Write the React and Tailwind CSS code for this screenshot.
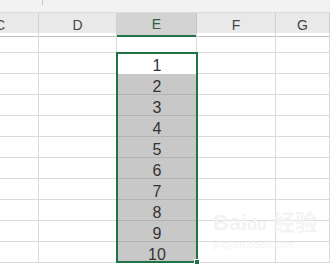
import React from "react";

const cols = ["C", "D", "E", "F", "G"];
const nums = [1, 2, 3, 4, 5, 6, 7, 8, 9, 10];

export default function App() {
  return (
    <div className="relative w-[330px] h-[265px] overflow-hidden bg-white" style={{ fontFamily: '"Liberation Sans", "Noto Sans", sans-serif' }}>
      <div className="relative h-[13px] bg-[#f2f2f2] border-b border-[#dcdcdc]">
        <div className="absolute left-[42px] top-0 w-px h-[5px] bg-[#c8c8c8]" />
      </div>
      <div className="grid grid-cols-[39px_78px_80px_79px_1fr] h-[20px] bg-[#e9e9e9]">
        {cols.map((c, i) => (
          <div
            key={c}
            className={
              c === "E"
                ? "flex items-center justify-center pt-[1px] bg-[#d3d3d3] border-b-2 border-[#217346] border-r border-r-[#c6c6c6] text-[14px] text-[#2d5e40]"
                : "flex items-center pt-[1px] border-b border-[#c3c3c3] border-r border-r-[#d0d0d0] text-[14px] text-[#444] " + (i === 0 ? "justify-start -ml-[5px]" : "justify-center")
            }
          >
            {c}
          </div>
        ))}
      </div>
      <div className="grid grid-cols-[39px_78px_80px_79px_1fr]">
        {cols.map((c) => (
          <div key={c} className="h-[20px] border-b border-r border-[#dadada]" />
        ))}
        {nums.map((n) => (
          <React.Fragment key={n}>
            <div className="h-[21px] border-b border-r border-[#dadada]" />
            <div className="h-[21px] border-b border-r border-[#dadada]" />
            <div
              className={
                n === 1
                  ? "h-[21px] flex items-center justify-center pt-[5px] bg-white text-[16px] text-[#333] leading-none"
                  : "h-[21px] flex items-center justify-center pt-[5px] bg-[#c8c8c8] border-b border-[#b3b3b3] text-[16px] text-[#333] leading-none"
              }
            >
              {n}
            </div>
            <div className="h-[21px] border-b border-r border-[#dadada]" />
            <div className="h-[21px] border-b border-r border-[#dadada]" />
          </React.Fragment>
        ))}
      </div>
      <div className="absolute left-[116px] top-[52px] w-[82px] h-[211px] border-2 border-[#217346] pointer-events-none" />
      <div className="absolute left-[194px] top-[259px] w-[6px] h-[6px] bg-[#217346] border border-white" />
      <div className="absolute left-[213px] top-[212px] flex flex-col gap-[6px] text-[#f3f3f3] leading-none pointer-events-none">
        <div className="text-[22px] font-bold" style={{ fontFamily: '"Liberation Sans", "Noto Sans CJK SC", sans-serif' }}>
          Bai<span className="text-[16px]">du</span> 经验
        </div>
        <div className="text-[10px]">jingyan.baidu.com</div>
      </div>
    </div>
  );
}
